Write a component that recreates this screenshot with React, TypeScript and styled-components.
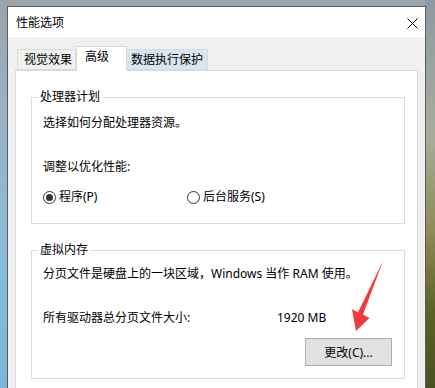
import React from "react";
import styled, { createGlobalStyle } from "styled-components";

const GlobalStyle = createGlobalStyle`
  html, body { margin: 0; padding: 0; }
  body {
    font-family: "Noto Sans", "Noto Sans CJK SC", sans-serif;
    font-size: 12px;
    color: #000;
  }
`;

const Desktop = styled.div`
  position: relative;
  width: 435px;
  height: 388px;
  overflow: hidden;
  box-sizing: border-box;
  padding: 6px 9px 0 7px;
  background:
    linear-gradient(to bottom, #8e9aa3 0%, #a7ad9a 35%, #8d8a55 60%, #5d6226 80%, #4a5020 100%) right top / 10px 100% no-repeat,
    linear-gradient(to bottom, #9aa3ab 0%, #9bb3c6 30%, #86bcdb 70%, #79b6d8 100%);
`;

const Window = styled.div`
  width: 419px;
  box-sizing: border-box;
  border: 1px solid #5c5c5c;
  border-bottom: none;
  background: #f0f0f0;
  display: flex;
  flex-direction: column;
`;

const TitleBar = styled.div`
  flex: none;
  height: 30px;
  background: #ffffff;
  display: flex;
  align-items: center;
  justify-content: space-between;
  padding: 0 7px 0 8px;
  font-size: 12px;
`;

const CloseButton = styled.div`
  width: 11px;
  height: 11px;
  display: flex;
  margin-top: 2px;
`;

const Body = styled.div`
  padding: 9px 7px 0 7px;
  display: flex;
  flex-direction: column;
`;

const TabRow = styled.div`
  display: flex;
  align-items: flex-end;
  padding-left: 2px;
  height: 24px;
  position: relative;
  z-index: 1;
`;

const Tab = styled.div<{ $selected?: boolean; $w: number; $pl: number; $hover?: boolean; $first?: boolean }>`
  box-sizing: border-box;
  width: ${(p) => p.$w}px;
  padding-left: ${(p) => p.$pl}px;
  height: ${(p) => (p.$selected ? 25 : 21)}px;
  margin-bottom: ${(p) => (p.$selected ? -1 : 0)}px;
  border: 1px solid #d9d9d9;
  border-bottom: ${(p) => (p.$selected ? "none" : "1px solid #d9d9d9")};
  border-left: ${(p) => (p.$selected || p.$first ? "1px solid #d9d9d9" : "none")};
  background: ${(p) => (p.$selected ? "#ffffff" : p.$hover ? "#d8e6f2" : "#f0f0f0")};
  line-height: ${(p) => (p.$selected ? 20 : 19)}px;
  white-space: nowrap;
`;

const Panel = styled.div`
  background: #ffffff;
  border: 1px solid #d9d9d9;
  height: 340px;
  padding: 26px 12px 0 15px;
  display: flex;
  flex-direction: column;
  gap: 26px;
`;

const GroupBox = styled.div<{ $pb: number }>`
  border: 1px solid #dcdcdc;
  padding: 0 12px ${(p) => p.$pb}px 11px;
  display: flex;
  flex-direction: column;
`;

const Legend = styled.div`
  align-self: flex-start;
  margin: -9px 0 0 -5px;
  padding: 0 2px 0 2px;
  background: #ffffff;
  line-height: 16px;
`;

const Line = styled.div<{ $mt: number }>`
  margin-top: ${(p) => p.$mt}px;
  line-height: 16px;
  white-space: nowrap;
`;

const RadioRow = styled.div`
  margin-top: 14px;
  display: grid;
  grid-template-columns: 144px auto;
  line-height: 16px;
`;

const RadioOption = styled.label`
  display: flex;
  align-items: center;
  gap: 3px;
`;

const RadioCircle = styled.span<{ $checked?: boolean }>`
  box-sizing: border-box;
  width: 13px;
  height: 13px;
  border-radius: 50%;
  border: 1px solid #333333;
  background: #ffffff;
  display: flex;
  align-items: center;
  justify-content: center;
  &::after {
    content: "";
    width: 7px;
    height: 7px;
    border-radius: 50%;
    background: ${(p) => (p.$checked ? "#333333" : "transparent")};
  }
`;

const SizeRow = styled.div`
  margin-top: 28px;
  display: grid;
  grid-template-columns: 234px auto;
  line-height: 16px;
`;

const ButtonRow = styled.div`
  margin-top: 12px;
  display: flex;
  justify-content: flex-end;
`;

const Button = styled.button`
  box-sizing: border-box;
  width: 87px;
  height: 28px;
  background: #e1e1e1;
  border: 1px solid #adadad;
  font-family: inherit;
  font-size: 12px;
  color: #000;
  padding: 0;
`;

const Arrow = styled.svg`
  position: absolute;
  left: 0;
  top: 0;
  pointer-events: none;
`;

export default function App() {
  return (
    <>
      <GlobalStyle />
      <Desktop>
        <Window>
          <TitleBar>
            <span>性能选项</span>
            <CloseButton>
              <svg width="11" height="11" viewBox="0 0 11 11">
                <path d="M0.5 0.5 L10.5 10.5 M10.5 0.5 L0.5 10.5" stroke="#000" strokeWidth="1" />
              </svg>
            </CloseButton>
          </TitleBar>
          <Body>
            <TabRow>
              <Tab $first $w={59} $pl={6}>视觉效果</Tab>
              <Tab $selected $w={51} $pl={8}>高级</Tab>
              <Tab $hover $w={81} $pl={4}>数据执行保护</Tab>
            </TabRow>
            <Panel>
              <GroupBox $pb={18}>
                <Legend>处理器计划</Legend>
                <Line $mt={10}>选择如何分配处理器资源。</Line>
                <Line $mt={28}>调整以优化性能:</Line>
                <RadioRow>
                  <RadioOption>
                    <RadioCircle $checked />
                    程序(P)
                  </RadioOption>
                  <RadioOption>
                    <RadioCircle />
                    后台服务(S)
                  </RadioOption>
                </RadioRow>
              </GroupBox>
              <GroupBox $pb={12}>
                <Legend>虚拟内存</Legend>
                <Line $mt={8}>分页文件是硬盘上的一块区域，Windows 当作 RAM 使用。</Line>
                <SizeRow>
                  <span>所有驱动器总分页文件大小:</span>
                  <span>1920 MB</span>
                </SizeRow>
                <ButtonRow>
                  <Button>更改(C)...</Button>
                </ButtonRow>
              </GroupBox>
            </Panel>
          </Body>
        </Window>
        <Arrow width="435" height="388" viewBox="0 0 435 388">
          <polygon
            points="383,261 363,314.5 369.5,318 356,331 352,309 358,312.5"
            fill="#f5393a"
          />
        </Arrow>
      </Desktop>
    </>
  );
}
